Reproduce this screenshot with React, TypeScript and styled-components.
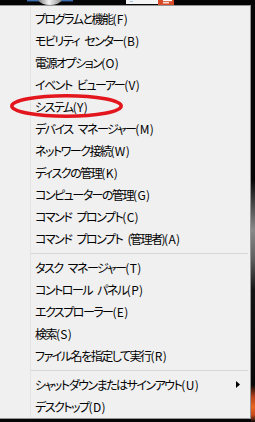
import styled, { createGlobalStyle } from 'styled-components';

/*
 *  page
 */
const GlobalStyle = createGlobalStyle`
  html, body {
    margin: 0;
    padding: 0;
    background: #050505;
  }
  body {
    font-family: "Noto Sans CJK JP", "Noto Sans", sans-serif;
  }
`;

const Screen = styled.div`
  width: 255px;
  height: 422px;
  overflow: hidden;
  display: flex;
  flex-direction: column;
  background: #050505;
`;

const Taskbar = styled.svg`
  display: block;
  flex: none;
`;

const Body = styled.div`
  flex: 1;
  display: flex;
  align-items: flex-start;
`;

// desktop wallpaper peeking out right of the menu
const DesktopEdge = styled.div`
  flex: 1;
  align-self: stretch;
  background: linear-gradient(
    to bottom,
    #060606 0,
    #060606 175px,
    #4a4a4a 200px,
    #8a8a8a 225px,
    #5c5c5c 255px,
    #141414 285px,
    #080808 380px,
    #b8401c 392px,
    #e8661f 402px,
    #c94a1c 410px,
    #0a0a0a 417px
  );
`;

/*
 *  menu
 */
const Menu = styled.div`
  position: relative;
  box-sizing: border-box;
  width: 251px;
  flex: none;
  display: flex;
  padding: 1px 0;
  background: #f0f0f0;
  border: 1px solid #979797;
  border-left: none;
`;

const Gutter = styled.div`
  width: 30px;
  flex: none;
`;

const List = styled.ul`
  flex: 1;
  display: flex;
  flex-direction: column;
  margin: 0;
  padding: 0 1px 0 0;
  list-style: none;
  border-left: 1px solid #e2e3e3;
`;

const Item = styled.li`
  height: 22px;
  display: flex;
  align-items: center;
  padding-left: 4px;
  color: #000;
  font-size: 12px;
  letter-spacing: -1.5px;
  word-spacing: 4px;
  font-feature-settings: 'palt';
  white-space: pre;
`;

const Key = styled.span`
  letter-spacing: 0.3px;
`;

const Separator = styled.li`
  height: 1px;
  margin: 4px 1px 2px 0;
  background: #d7d7d7;
`;

const SubArrow = styled.svg`
  margin-left: auto;
  margin-right: 9px;
`;

const Circle = styled.svg`
  position: absolute;
  left: 9px;
  top: 87px;
  pointer-events: none;
`;

type Entry = { label: string; key: string; sub?: boolean } | 'sep';

const entries: Entry[] = [
  { label: 'プログラムと機能', key: '(F)' },
  { label: 'モビリティ センター', key: '(B)' },
  { label: '電源オプション', key: '(O)' },
  { label: 'イベント ビューアー', key: '(V)' },
  { label: 'システム', key: '(Y)' },
  { label: 'デバイス マネージャー', key: '(M)' },
  { label: 'ネットワーク接続', key: '(W)' },
  { label: 'ディスクの管理', key: '(K)' },
  { label: 'コンピューターの管理', key: '(G)' },
  { label: 'コマンド プロンプト', key: '(C)' },
  { label: 'コマンド プロンプト (管理者)', key: '(A)' },
  'sep',
  { label: 'タスク マネージャー', key: '(T)' },
  { label: 'コントロール パネル', key: '(P)' },
  { label: 'エクスプローラー', key: '(E)' },
  { label: '検索', key: '(S)' },
  { label: 'ファイル名を指定して実行', key: '(R)' },
  'sep',
  { label: 'シャットダウンまたはサインアウト', key: '(U)', sub: true },
  { label: 'デスクトップ', key: '(D)' },
];

const TaskbarStrip = () => (
  <Taskbar width="255" height="5" viewBox="0 0 255 5">
    <defs>
      <linearGradient id="knob" x1="0" x2="1" y1="0" y2="0">
        <stop offset="0" stopColor="#7d7d7d" />
        <stop offset="0.45" stopColor="#f2f2f2" />
        <stop offset="1" stopColor="#8c8c8c" />
      </linearGradient>
    </defs>
    <rect x="27" y="0" width="46" height="1.4" fill="#3a6cae" />
    <path d="M38 0 H62 Q59 5 50 5 Q41 5 38 0 Z" fill="url(#knob)" />
    <rect x="126" y="0" width="32" height="4" fill="#f4f4f4" />
    <rect x="130" y="1" width="3" height="1" fill="#9fc3e6" />
    <rect x="158" y="0" width="16" height="5" fill="#d64a28" />
    <rect x="163" y="0" width="9" height="1.2" fill="#fff" />
    <rect x="163" y="2.2" width="6" height="1.2" fill="#fff" />
  </Taskbar>
);

export default function App() {
  return (
    <Screen>
      <GlobalStyle />
      <TaskbarStrip />
      <Body>
        <Menu>
          <Gutter />
          <List>
            {entries.map((e, i) =>
              e === 'sep' ? (
                <Separator key={i} />
              ) : (
                <Item key={i}>
                  {e.label}
                  <Key>{e.key}</Key>
                  {e.sub && (
                    <SubArrow width="4" height="7" viewBox="0 0 4 7">
                      <path d="M0 0 L4 3.5 L0 7 Z" fill="#000" />
                    </SubArrow>
                  )}
                </Item>
              )
            )}
          </List>
          <Circle width="116" height="27" viewBox="0 0 116 27">
            <ellipse
              cx="57.5"
              cy="13"
              rx="54.7"
              ry="10.3"
              fill="none"
              stroke="#e3161d"
              strokeWidth="3.5"
            />
          </Circle>
        </Menu>
        <DesktopEdge />
      </Body>
    </Screen>
  );
}
